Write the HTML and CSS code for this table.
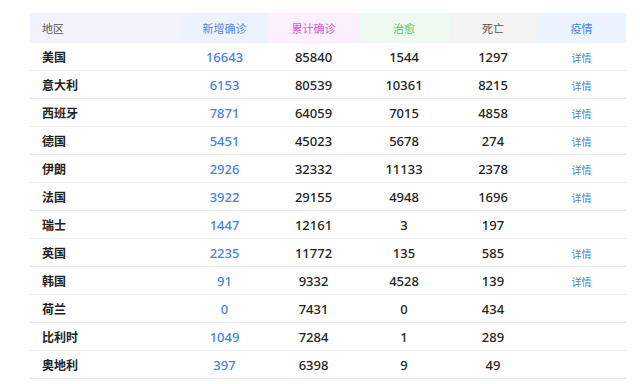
FILE: index.html
```html
<!DOCTYPE html>
<html lang="zh">
<head>
  <meta charset="UTF-8">
  <meta name="viewport" content="width=device-width, initial-scale=1.0">
  <title>海外疫情</title>
  <link rel="stylesheet" href="styles.css">
</head>
<body>
  <table class="stats">
    <colgroup>
      <col class="c-area">
      <col class="c-new">
      <col class="c-total">
      <col class="c-cured">
      <col class="c-dead">
      <col class="c-info">
    </colgroup>
    <thead>
      <tr>
        <th class="h-area">地区</th>
        <th class="h-new">新增确诊</th>
        <th class="h-total">累计确诊</th>
        <th class="h-cured">治愈</th>
        <th class="h-dead">死亡</th>
        <th class="h-info">疫情</th>
      </tr>
    </thead>
    <tbody>
      <tr><td class="area">美国</td><td class="new">16643</td><td>85840</td><td>1544</td><td>1297</td><td><a class="more">详情</a></td></tr>
      <tr><td class="area">意大利</td><td class="new">6153</td><td>80539</td><td>10361</td><td>8215</td><td><a class="more">详情</a></td></tr>
      <tr><td class="area">西班牙</td><td class="new">7871</td><td>64059</td><td>7015</td><td>4858</td><td><a class="more">详情</a></td></tr>
      <tr><td class="area">德国</td><td class="new">5451</td><td>45023</td><td>5678</td><td>274</td><td><a class="more">详情</a></td></tr>
      <tr><td class="area">伊朗</td><td class="new">2926</td><td>32332</td><td>11133</td><td>2378</td><td><a class="more">详情</a></td></tr>
      <tr><td class="area">法国</td><td class="new">3922</td><td>29155</td><td>4948</td><td>1696</td><td><a class="more">详情</a></td></tr>
      <tr><td class="area">瑞士</td><td class="new">1447</td><td>12161</td><td>3</td><td>197</td><td></td></tr>
      <tr><td class="area">英国</td><td class="new">2235</td><td>11772</td><td>135</td><td>585</td><td><a class="more">详情</a></td></tr>
      <tr><td class="area">韩国</td><td class="new">91</td><td>9332</td><td>4528</td><td>139</td><td><a class="more">详情</a></td></tr>
      <tr><td class="area">荷兰</td><td class="new">0</td><td>7431</td><td>0</td><td>434</td><td></td></tr>
      <tr><td class="area">比利时</td><td class="new">1049</td><td>7284</td><td>1</td><td>289</td><td></td></tr>
      <tr><td class="area">奥地利</td><td class="new">397</td><td>6398</td><td>9</td><td>49</td><td></td></tr>
    </tbody>
  </table>
</body>
</html>
```

FILE: styles.css
```css
body {
  margin: 0;
  padding: 13px 14px 0 30px;
  background: #fff;
  font-family: "Noto Sans", "Noto Sans CJK SC", sans-serif;
  color: #222;
}

.stats {
  width: 596px;
  table-layout: fixed;
  border-collapse: collapse;
  border-spacing: 0;
}

.c-area { width: 151px; }
.c-new { width: 87px; }
.c-total { width: 91px; }
.c-cured { width: 90px; }
.c-dead { width: 88px; }
.c-info { width: 89px; }

.stats th {
  height: 30px;
  padding: 0;
  font-size: 11px;
  font-weight: normal;
  text-align: center;
}

.stats th.h-area {
  text-align: left;
  padding-left: 12px;
  background: #f1f2fc;
  color: #555;
}

.h-new { background: #ecf3fe; color: #5b86d6; }
.h-total { background: #fcf0fe; color: #cf5ad6; }
.h-cured { background: #eefaef; color: #5fb862; }
.h-dead { background: #f3f3f3; color: #555; }
.h-info { background: #ebf3ff; color: #3f86e8; }

.stats td {
  height: 27px;
  padding: 0;
  border-bottom: 1px solid #ececec;
  font-size: 13px;
  font-weight: 500;
  text-align: center;
  color: #222;
}

.stats td.area {
  text-align: left;
  padding-left: 12px;
  font-size: 12px;
  font-weight: bold;
}

.stats td.new {
  color: #4a7fe0;
}

.more {
  font-size: 10px;
  font-weight: normal;
  color: #3f86e8;
  cursor: pointer;
}
```
